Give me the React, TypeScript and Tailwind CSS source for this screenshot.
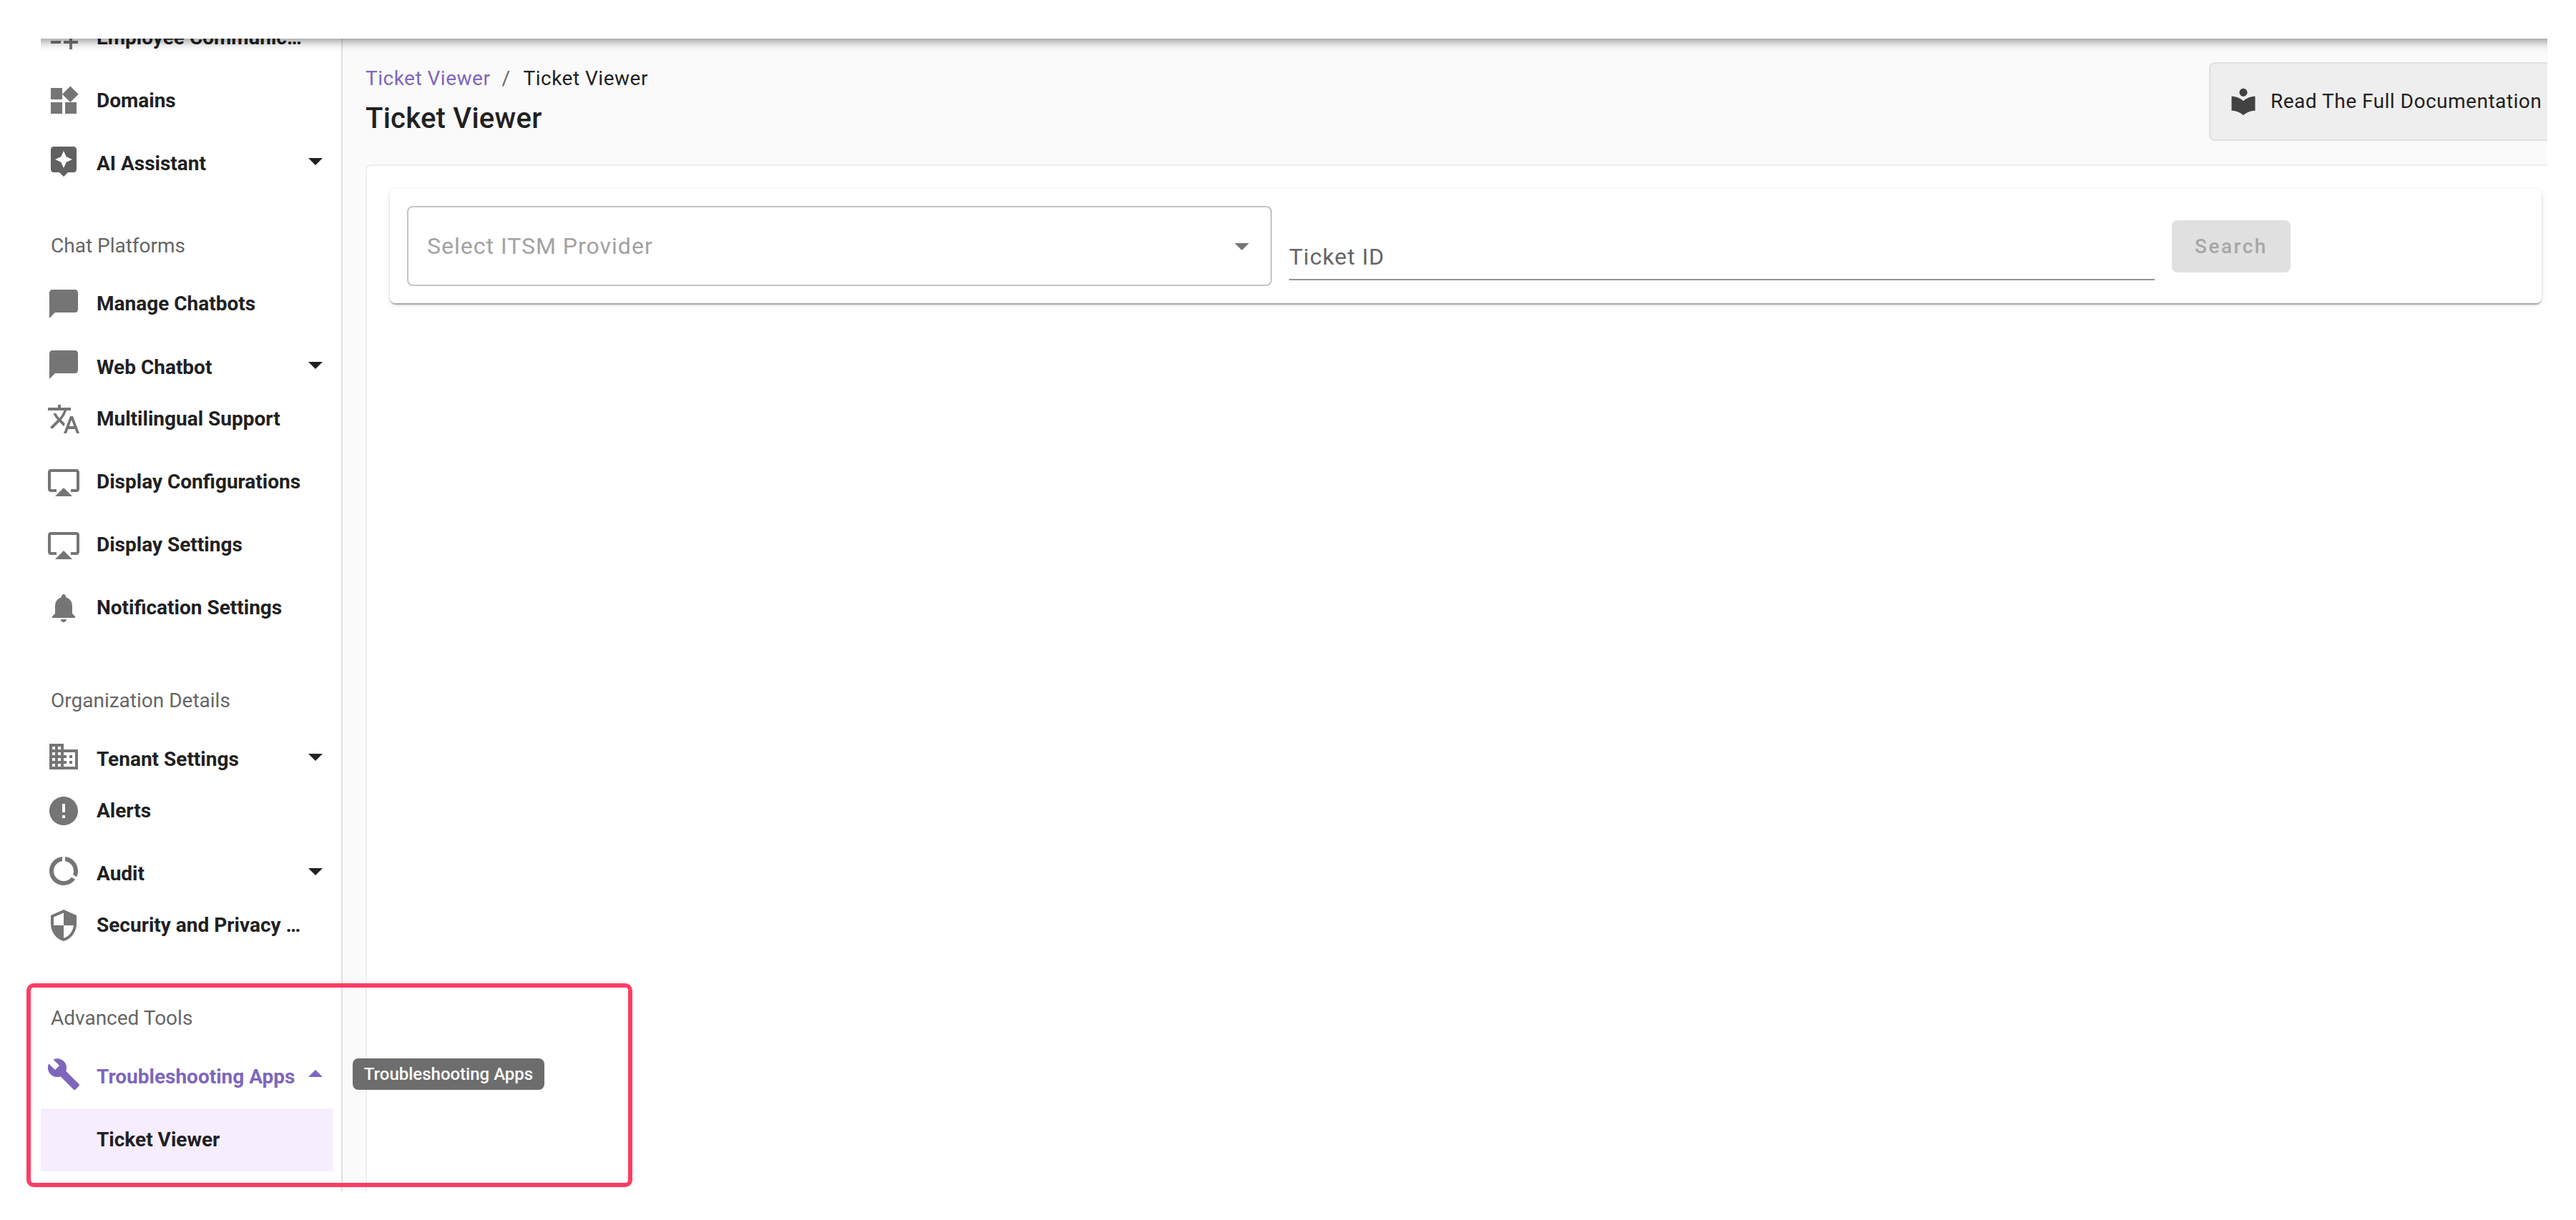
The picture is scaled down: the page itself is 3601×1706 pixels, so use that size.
import { clsx } from "clsx";
import type { IconType } from "react-icons";
import {
  MdAirplay,
  MdArrowDropDown,
  MdArrowDropUp,
  MdAssistant,
  MdBuild,
  MdBusiness,
  MdChatBubble,
  MdDataUsage,
  MdError,
  MdLocalLibrary,
  MdNotifications,
  MdPlaylistAdd,
  MdSecurity,
  MdTranslate,
  MdWidgets,
} from "react-icons/md";

type NavItem = {
  label: string;
  icon: IconType;
  iconClass?: string;
  className?: string;
  expandable?: boolean;
  open?: boolean;
  children?: string[];
};

type NavSection = {
  title?: string;
  titleClass?: string;
  items: NavItem[];
};

const sections: NavSection[] = [
  {
    items: [
      { label: "Employee Communic…", icon: MdPlaylistAdd },
      { label: "Domains", icon: MdWidgets },
      {
        label: "AI Assistant",
        icon: MdAssistant,
        iconClass: "text-[#616161]",
        expandable: true,
      },
    ],
  },
  {
    title: "Chat Platforms",
    titleClass: "pt-[67px]",
    items: [
      { label: "Manage Chatbots", icon: MdChatBubble },
      {
        label: "Web Chatbot",
        icon: MdChatBubble,
        className: "mt-px",
        expandable: true,
      },
      { label: "Multilingual Support", icon: MdTranslate },
      { label: "Display Configurations", icon: MdAirplay },
      { label: "Display Settings", icon: MdAirplay },
      { label: "Notification Settings", icon: MdNotifications },
    ],
  },
  {
    title: "Organization Details",
    items: [
      { label: "Tenant Settings", icon: MdBusiness, expandable: true },
      { label: "Alerts", icon: MdError },
      { label: "Audit", icon: MdDataUsage, expandable: true },
      { label: "Security and Privacy …", icon: MdSecurity },
    ],
  },
  {
    title: "Advanced Tools",
    items: [
      {
        label: "Troubleshooting Apps",
        icon: MdBuild,
        expandable: true,
        open: true,
        children: ["Ticket Viewer"],
      },
    ],
  },
];

function NavRow({ item }: { item: NavItem }) {
  let Icon = item.icon;
  let Caret = item.open ? MdArrowDropUp : MdArrowDropDown;

  return (
    <>
      <div
        className={clsx(
          "flex pl-2",
          item.expandable ? "h-[72px] items-start pt-4" : "h-[88px] items-center",
          item.open ? "text-[#7e66be]" : "text-[#212121]",
          item.className,
        )}
      >
        <Icon
          className={clsx(
            "size-12 shrink-0",
            item.iconClass ?? (!item.open && "text-[#757575]"),
          )}
        />
        <span
          className={clsx(
            "ml-[22px] w-[282px] text-[28px]/[40px] font-bold whitespace-nowrap",
            item.expandable && "mt-2",
          )}
        >
          {item.label}
        </span>
        {item.expandable && <Caret className="size-12 shrink-0" />}
      </div>
      {item.children?.map((child) => (
        <div
          key={child}
          className="mt-4 flex h-[88px] w-[408px] items-center bg-[#f6eefe] pl-[78px] text-[28px]/[40px] font-bold text-[#212121]"
        >
          {child}
        </div>
      ))}
    </>
  );
}

function Sidebar() {
  return (
    <nav className="w-[422px] shrink-0 overflow-hidden border-r-2 border-[#e0e0e0] bg-white">
      {/* scrolled, so the first row sits half under the app bar */}
      <div className="-mt-[45px]">
        {sections.map((section, index) => (
          <section key={index}>
            {section.title && (
              <h2
                className={clsx(
                  "h-[124px] pl-[14px] text-[28px]/[40px] text-[#666666]",
                  section.titleClass ?? "pt-[66px]",
                )}
              >
                {section.title}
              </h2>
            )}
            {section.items.map((item) => (
              <NavRow key={item.label} item={item} />
            ))}
          </section>
        ))}
      </div>
    </nav>
  );
}

function PageHeader() {
  return (
    <div className="flex h-[176px] justify-between pl-8">
      <div className="pt-9">
        <div className="flex text-[28px]/[40px] tracking-[0.5px]">
          <a className="text-[#7e66be]">Ticket Viewer</a>
          <span className="mr-[18px] ml-4 text-[#666666]">/</span>
          <span className="text-[#212121]">Ticket Viewer</span>
        </div>
        <h1 className="mt-1 text-[40px]/[64px] font-medium tracking-[0.25px] text-[#212121]">
          Ticket Viewer
        </h1>
      </div>
      <button className="mt-[33px] -mr-6 flex h-[110px] w-[497px] items-center rounded-lg border-2 border-[#e0e0e0] bg-[#eeeeee] pl-6 text-[28px]/[40px] tracking-[0.5px] whitespace-nowrap text-[#212121]">
        <MdLocalLibrary className="mr-4 size-11 shrink-0 text-[#424242]" />
        Read The Full Documentation
      </button>
    </div>
  );
}

function SearchCard() {
  return (
    <div className="flex h-40 w-[3008px] items-start rounded-lg bg-white p-6 shadow-[0_4px_2px_-2px_rgba(0,0,0,0.2),0_2px_2px_0_rgba(0,0,0,0.14),0_2px_6px_0_rgba(0,0,0,0.12)]">
      <div className="flex h-28 w-[1209px] items-center justify-between rounded-lg border-2 border-[#c4c4c4] pr-4 pl-[26px]">
        <span className="text-[32px]/[40px] tracking-[1px] text-[#a2a2a2]">
          Select ITSM Provider
        </span>
        <MdArrowDropDown className="size-12 text-[#757575]" />
      </div>
      <div className="ml-6 flex h-[104px] w-[1210px] items-end border-b-2 border-[#949494] pb-[11px]">
        <span className="text-[32px]/[40px] tracking-[1px] text-[#666666]">
          Ticket ID
        </span>
      </div>
      <button className="mt-5 ml-6 h-[73px] w-[166px] rounded-lg bg-[#e0e0e0] text-[28px]/[40px] font-medium tracking-[2.5px] text-[#a6a6a6]">
        Search
      </button>
    </div>
  );
}

export default function App() {
  return (
    <div className="relative h-[1706px] w-[3601px] overflow-hidden bg-white font-[Roboto,sans-serif]">
      <div className="ml-[57px] flex h-[1666px] w-[3504px] flex-col overflow-hidden">
        <header className="relative z-10 -mx-10 h-[54px] shrink-0 bg-white shadow-[0_4px_8px_-2px_rgba(0,0,0,0.2),0_8px_10px_0_rgba(0,0,0,0.14),0_2px_20px_0_rgba(0,0,0,0.12)]" />
        <div className="flex min-h-0 flex-1">
          <Sidebar />
          <main className="flex min-w-0 flex-1 flex-col bg-[#fafafa]">
            <PageHeader />
            <div className="-mr-4 -mb-4 ml-8 flex-1 rounded-lg border-2 border-[#eeeeee] bg-white p-8">
              <SearchCard />
            </div>
          </main>
        </div>
      </div>
      <div className="absolute top-[1480px] left-[493px] flex h-11 w-[268px] items-center justify-center rounded-lg bg-[#616161]/92 text-2xl/7 font-medium text-white">
        Troubleshooting Apps
      </div>
      <div className="absolute top-[1375px] left-[37px] h-[285px] w-[847px] rounded-[10px] border-6 border-[#ff3c64]" />
    </div>
  );
}
